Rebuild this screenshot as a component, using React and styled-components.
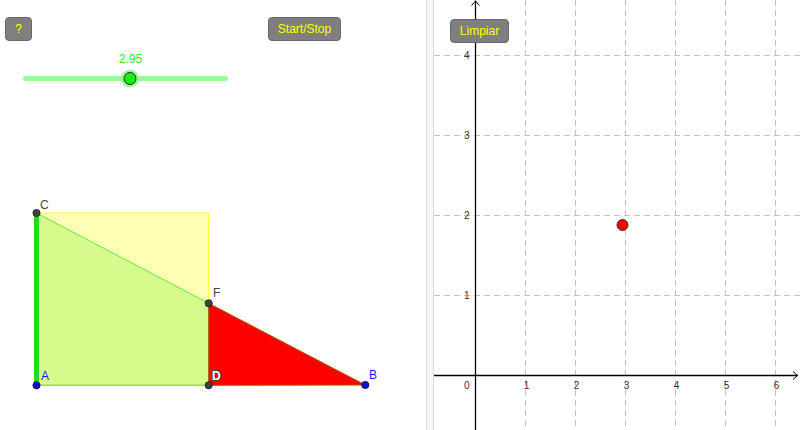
import React from 'react';
import styled, { createGlobalStyle } from 'styled-components';

const GlobalStyle = createGlobalStyle`
  html, body {
    margin: 0;
    padding: 0;
    background: #ffffff;
    overflow: hidden;
  }
  body {
    font-family: 'Liberation Sans', Arial, sans-serif;
  }
`;

const Applet = styled.div`
  display: flex;
  width: 800px;
  height: 430px;
  background: #ffffff;
`;

const Panel = styled.div`
  position: relative;
  width: ${({ width }) => (width ? `${width}px` : 'auto')};
  flex: ${({ width }) => (width ? '0 0 auto' : '1 1 auto')};
  height: 100%;
  overflow: hidden;
`;

const Splitter = styled.div`
  flex: 0 0 6px;
  height: 100%;
  background: #f7f7f7;
  border-left: 1px solid #dcdcdc;
  border-right: 1px solid #dcdcdc;
`;

const Canvas = styled.svg`
  display: block;
  width: 100%;
  height: 100%;
  font-family: 'Liberation Sans', Arial, sans-serif;
`;

// GeoGebra buttons sit on the free graphics canvas at their own coordinates
const GeoButton = styled.button`
  position: absolute;
  left: ${({ x }) => x}px;
  top: ${({ y }) => y}px;
  width: ${({ w }) => w}px;
  height: 24px;
  padding: 0;
  box-sizing: border-box;
  background: #7f7f7f;
  border: 1px solid #6a6a6a;
  border-radius: 4px;
  color: #ffff00;
  font-family: 'Liberation Sans', Arial, sans-serif;
  font-size: 12px;
  line-height: 22px;
  text-align: center;
  cursor: pointer;
`;

const pointR = 3.6;

const Slider = ({ value }) => {
  const x1 = 25.5;
  const x2 = 225.5;
  const kx = 130;
  const y = 78.5;
  return (
    <g>
      <line x1={x1} y1={y} x2={x2} y2={y} stroke="#9af89a" strokeWidth="5" strokeLinecap="round" />
      <circle cx={kx} cy={y} r="9" fill="#9cf79c" />
      <circle cx={kx} cy={y} r="6" fill="#16ee0c" stroke="#2a2a2a" strokeWidth="1" />
      <text x={kx + 0.5} y="63" textAnchor="middle" fontSize="12" fill="#2fe82f">
        {value}
      </text>
    </g>
  );
};

const Construction = () => {
  const A = [36.5, 385.3];
  const C = [36.5, 213];
  const D = [208.7, 385.3];
  const F = [208.7, 303.3];
  const B = [365.3, 385];
  const pts = (...p) => p.map(q => q.join(',')).join(' ');
  return (
    <g>
      <rect x={C[0]} y={C[1]} width={D[0] - C[0]} height={A[1] - C[1]} fill="#ffffb3" stroke="#ffff1a" strokeWidth="1" />
      <polygon points={pts(A, C, F, D)} fill="#d6fb8b" />
      <line x1={C[0]} y1={C[1]} x2={F[0]} y2={F[1]} stroke="#5fe84a" strokeWidth="1" />
      <line x1={A[0]} y1={A[1]} x2={D[0]} y2={D[1]} stroke="#a6d83a" strokeWidth="1.5" />
      <polygon points={pts(F, D, B)} fill="#ff0000" stroke="#a35a00" strokeWidth="1" strokeLinejoin="round" />
      <line x1={A[0]} y1={A[1]} x2={C[0]} y2={C[1]} stroke="#1fdc1f" strokeWidth="5" />

      <circle cx={C[0]} cy={C[1]} r={pointR} fill="#424242" stroke="#1a1a1a" strokeWidth="0.8" />
      <circle cx={F[0]} cy={F[1]} r={pointR} fill="#424242" stroke="#1a1a1a" strokeWidth="0.8" />
      <circle cx={D[0]} cy={D[1]} r={pointR} fill="#424242" stroke="#1a1a1a" strokeWidth="0.8" />
      <circle cx={A[0]} cy={A[1]} r={pointR} fill="#1010d8" stroke="#000066" strokeWidth="0.8" />
      <circle cx={B[0]} cy={B[1]} r={pointR} fill="#1010d8" stroke="#000066" strokeWidth="0.8" />

      <g fontSize="12">
        <text x="40" y="209" fill="#444444">C</text>
        <text x="213" y="297" fill="#444444">F</text>
        <text x="41" y="380" fill="#1a1aff">A</text>
        <text x="212" y="380" fill="#ffffff" stroke="#444444" strokeWidth="2" paintOrder="stroke" fontWeight="bold">D</text>
        <text x="369" y="379" fill="#1a1aff">B</text>
      </g>
    </g>
  );
};

const Graph = ({ point }) => {
  const ox = 41;
  const oy = 375;
  const ux = 50;
  const uy = 80;
  const w = 366;
  const h = 430;
  const xs = [1, 2, 3, 4, 5, 6];
  const ys = [1, 2, 3, 4];
  return (
    <g>
      <g stroke="#c0c0c0" strokeWidth="1" strokeDasharray="6,4">
        {xs.map(k => (
          <line key={`vx${k}`} x1={ox + k * ux + 0.5} y1="0" x2={ox + k * ux + 0.5} y2={h} />
        ))}
        {ys.map(k => (
          <line key={`hy${k}`} x1="0" y1={oy - k * uy + 0.5} x2={w} y2={oy - k * uy + 0.5} />
        ))}
      </g>

      <g stroke="#000000" strokeWidth="1.3" fill="none">
        <line x1={ox + 0.5} y1={h} x2={ox + 0.5} y2="0.5" />
        <polyline points={`${ox - 3.5},5.5 ${ox + 0.5},1 ${ox + 4.5},5.5`} strokeWidth="1" />
        <line x1="0" y1={oy + 0.5} x2={w - 2} y2={oy + 0.5} />
        <polyline points={`${w - 7},${oy - 3.5} ${w - 2.5},${oy + 0.5} ${w - 7},${oy + 4.5}`} strokeWidth="1" />
      </g>

      <g fontSize="10" fill="#333333">
        <text x={ox - 8.3} y="389" textAnchor="middle">0</text>
        {xs.map(k => (
          <text key={`lx${k}`} x={ox + k * ux + 1.5} y="389" textAnchor="middle">{k}</text>
        ))}
        {ys.map(k => (
          <text key={`ly${k}`} x={ox - 5.5} y={oy - k * uy + 4} textAnchor="end">{k}</text>
        ))}
      </g>

      <circle cx={ox + point[0] * ux} cy={oy - point[1] * uy} r="5.5" fill="#ff0000" stroke="#333333" strokeWidth="1" />
    </g>
  );
};

export default function App() {
  return (
    <>
      <GlobalStyle />
      <Applet>
        <Panel width={426}>
          <Canvas viewBox="0 0 426 430">
            <Slider value="2.95" />
            <Construction />
          </Canvas>
          <GeoButton x={5} y={17} w={27}>?</GeoButton>
          <GeoButton x={268} y={17} w={73}>Start/Stop</GeoButton>
        </Panel>
        <Splitter />
        <Panel>
          <Canvas viewBox="0 0 366 430">
            <Graph point={[2.95, 1.875]} />
          </Canvas>
          <GeoButton x={16} y={19} w={59}>Limpiar</GeoButton>
        </Panel>
      </Applet>
    </>
  );
}
